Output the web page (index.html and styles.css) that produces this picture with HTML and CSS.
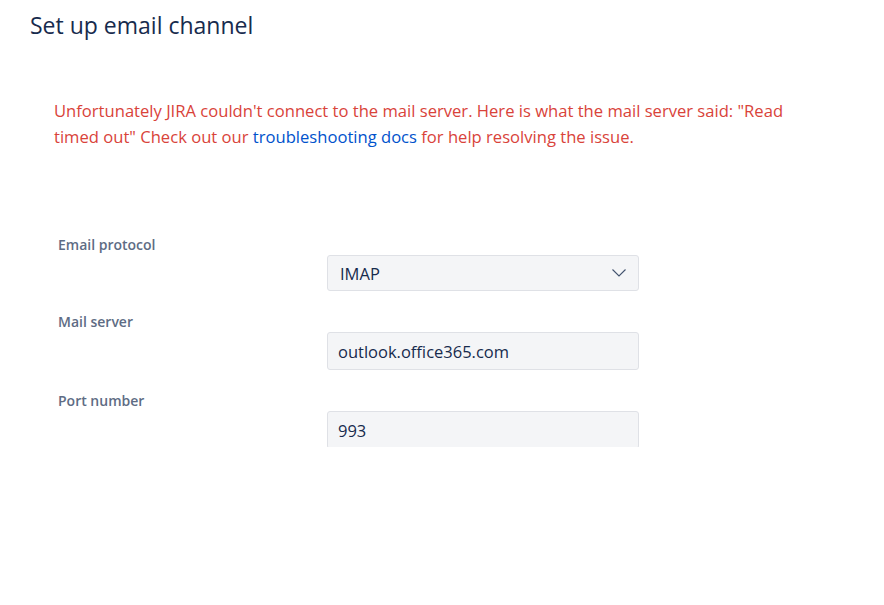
FILE: index.html
```html
<!DOCTYPE html>
<html>
<head>
<meta charset="utf-8">
<link rel="stylesheet" href="styles.css">
</head>
<body>
<div class="page">
  <h1 class="title">Set up email channel</h1>
  <p class="error"><span>Unfortunately JIRA couldn't connect to the mail server. Here is what the mail server said: "Read</span><br><span>timed out" Check out our </span><a class="link" href="#">troubleshooting docs</a><span> for help resolving the issue.</span></p>
  <div class="form">
    <div class="field">
      <div class="label">Email protocol</div>
      <div class="control select">
        <span class="value">IMAP</span>
        <svg class="chevron" width="16" height="10" viewBox="0 0 16 10"><path d="M1.5 1.5 L8 8 L14.5 1.5" fill="none" stroke="#42526e" stroke-width="1.1"/></svg>
      </div>
    </div>
    <div class="field">
      <div class="label">Mail server</div>
      <div class="control input"><span class="value">outlook.office365.com</span></div>
    </div>
    <div class="field">
      <div class="label">Port number</div>
      <div class="control input"><span class="value">993</span></div>
    </div>
  </div>
</div>
</body>
</html>
```
FILE: styles.css
```css
html, body {
  margin: 0;
  padding: 0;
  background: #ffffff;
}
body {
  font-family: "Open Sans", "Noto Sans", sans-serif;
  color: #172b4d;
}
.page {
  padding: 8px 0 0 30px;
}
.title {
  margin: 0;
  font-size: 23px;
  font-weight: 400;
  line-height: 34px;
  color: #172b4d;
}
.error {
  margin: 56px 0 0 24px;
  width: 780px;
  font-size: 16.6px;
  line-height: 26px;
  color: #d9433a;
}
.link {
  color: #0052cc;
  text-decoration: none;
}
.form {
  margin: 85px 0 0 28px;
  height: 212px;
  overflow: hidden;
}
.field {
  display: flex;
  flex-direction: column;
  margin-bottom: 21px;
}
.label {
  font-size: 14px;
  font-weight: 600;
  line-height: 20px;
  color: #5e6c84;
}
.control {
  margin-left: 269px;
  width: 312px;
  height: 36px;
  box-sizing: border-box;
  border: 1px solid #dfe1e6;
  border-radius: 3px;
  background: #f4f5f7;
  display: flex;
  align-items: center;
  justify-content: space-between;
  padding: 0 11px 0 12px;
}
.input {
  height: 38px;
  padding-left: 10px;
}
.value {
  font-size: 16.5px;
  color: #172b4d;
}
.chevron {
  display: block;
}
```
